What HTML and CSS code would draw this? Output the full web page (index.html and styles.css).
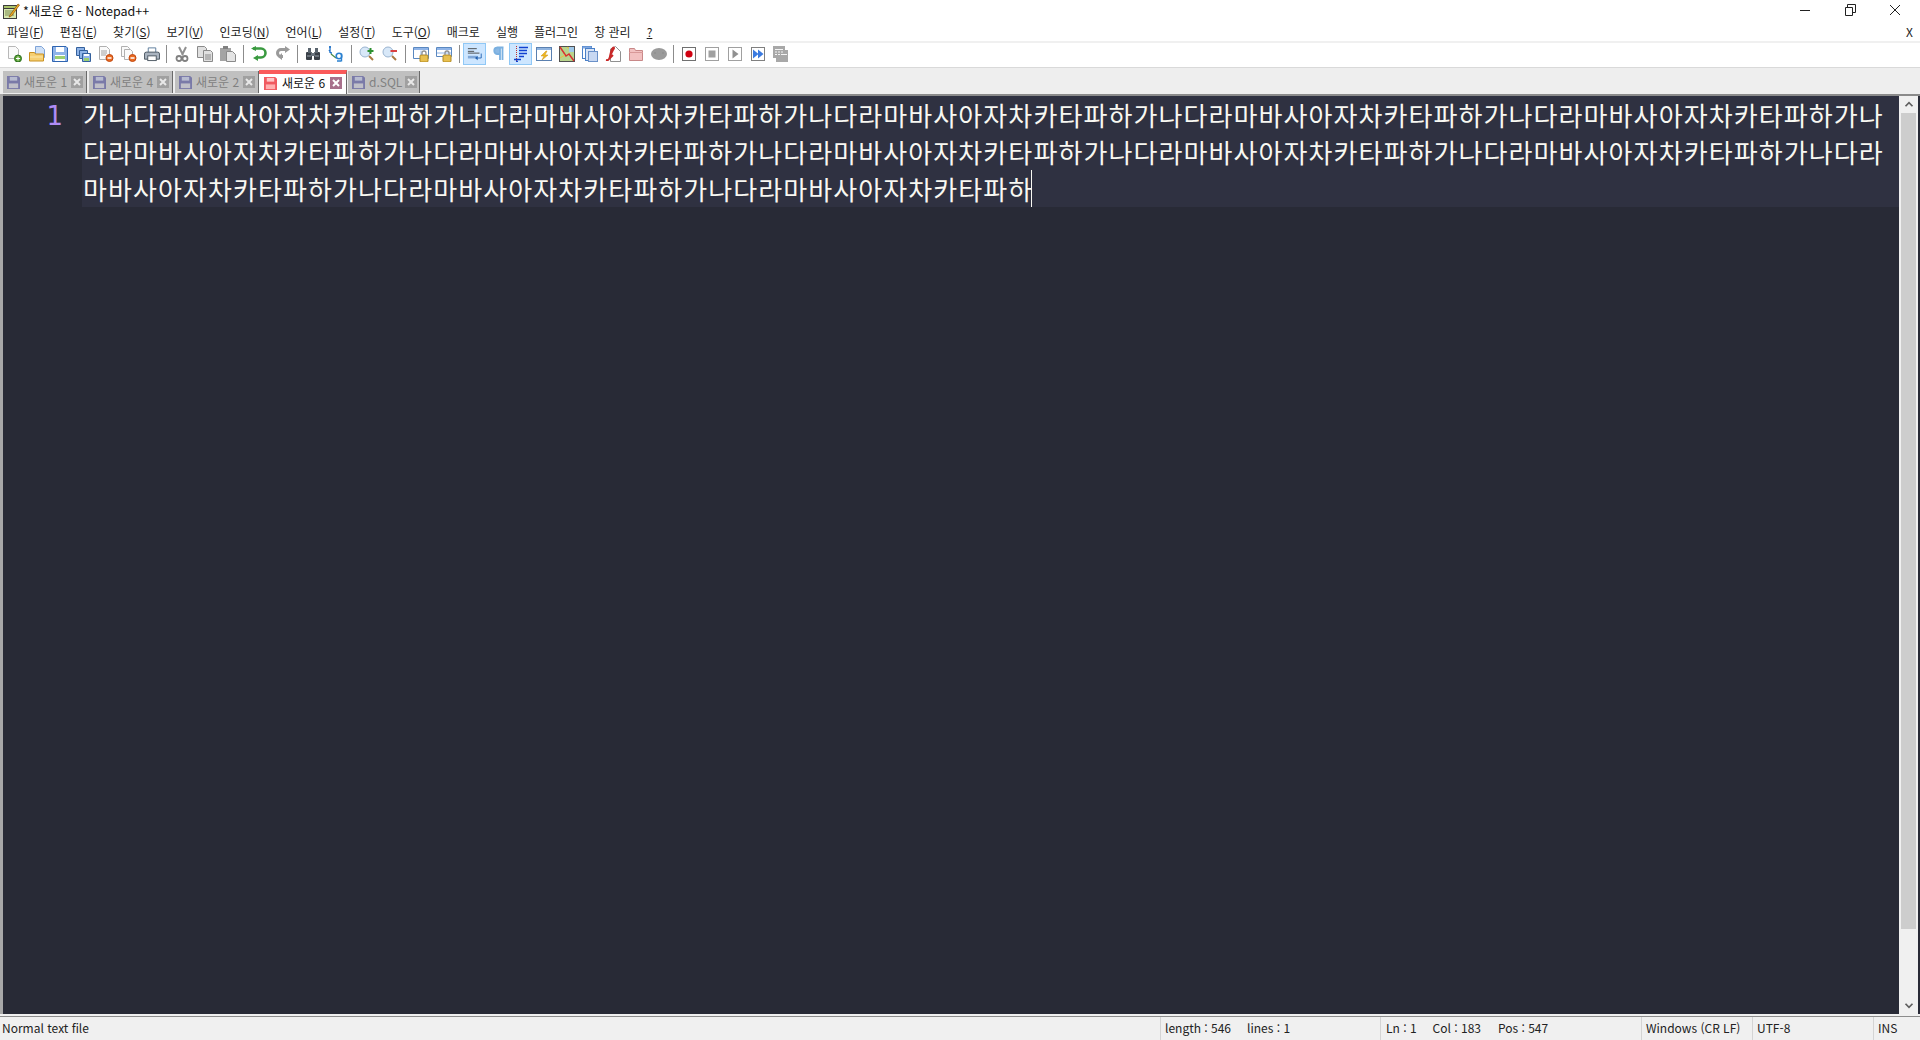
FILE: index.html
```html
<!DOCTYPE html>
<html lang="ko">
<head>
<meta charset="utf-8">
<title>*새로운 6 - Notepad++</title>
<link rel="stylesheet" href="styles.css">
</head>
<body>
<div class="app">
  <header class="titlebar">
    <svg class="app-icon" viewBox="0 0 18 18"><rect x="1.5" y="3.5" width="13" height="13" fill="#d8e8b0" stroke="#3c3c3c"/><path d="M1.5 3.5h13v3h-13z" fill="#a9c46a" stroke="#3c3c3c"/><path d="M3 9h9M3 11h8M3 13h9" stroke="#7a8a50"/><path d="M8 13l8-11 1.5 1-8 11-2.5 1z" fill="#f0b020" stroke="#8a5010" stroke-width=".7"/></svg>
    <span class="title-text">*새로운 6 - Notepad++</span>
    <div class="win-controls">
      <svg viewBox="0 0 12 12"><path d="M1 6.500h10" stroke="#222" fill="none"/></svg>
      <svg viewBox="0 0 12 12"><path d="M1.500 3.500h7v8h-7zM3.500 3.500v-3h8v8h-3" stroke="#222" fill="none"/></svg>
      <svg viewBox="0 0 12 12"><path d="M1 1l10 10M11 1L1 11" stroke="#222" fill="none"/></svg>
    </div>
  </header>

  <nav class="menubar">
    <span>파일(<u>F</u>)</span><span>편집(<u>E</u>)</span><span>찾기(<u>S</u>)</span><span>보기(<u>V</u>)</span><span>인코딩(<u>N</u>)</span><span>언어(<u>L</u>)</span><span>설정(<u>T</u>)</span><span>도구(<u>O</u>)</span><span>매크로</span><span>실행</span><span>플러그인</span><span>창 관리</span><span><u>?</u></span>
    <span class="menu-close">X</span>
  </nav>

  <div class="toolbar">
    <div class="tb"><svg viewBox="0 0 16 16"><path d="M2.500.5h7l3 3v9h-10z" fill="#fafafa" stroke="#b8b8b8"/><circle cx="12" cy="12.500" r="3.500" fill="#58a030" stroke="#2c7020"/><path d="M12 10.500v4M10 12.500h4" stroke="#fff"/></svg></div>
    <div class="tb"><svg viewBox="0 0 16 16"><path d="M6.500.5h6l3 3v8h-9z" fill="#cfe0f6" stroke="#7fa4d8"/><path d="M.5 6.500h5l1 1.500h8v7h-14z" fill="#f6cf72" stroke="#c89020"/><path d="M1 11h13" stroke="#fae6a8"/></svg></div>
    <div class="tb"><svg viewBox="0 0 16 16"><path d="M.5.5h13.500l1.500 1.500v13.500h-15z" fill="#8fb4e8" stroke="#2f64b0"/><rect x="4" y="1" width="8" height="5" fill="#fff"/><rect x="3" y="9" width="10" height="6" fill="#fff"/><rect x="3" y="10" width="10" height="3" fill="#9ccf70"/></svg></div>
    <div class="tb"><svg viewBox="0 0 16 16"><path d="M1.500 1.500h8v8h-8z" fill="#8fb4e8" stroke="#34609c"/><path d="M4.500 4.500h8v8h-8z" fill="#8fb4e8" stroke="#34609c"/><path d="M7.500 7.500h8v8h-8z" fill="#8fb4e8" stroke="#34609c"/><rect x="9" y="12" width="5" height="3" fill="#9ccf70"/><rect x="9" y="8" width="5" height="2" fill="#fff"/></svg></div>
    <div class="tb"><svg viewBox="0 0 16 16"><path d="M1.500.5h7l3 3v10h-10z" fill="#fafafa" stroke="#b0b0b0"/><path d="M3 5h6M3 7h6M3 9h5" stroke="#a0a0a0"/><circle cx="11.500" cy="12" r="3.500" fill="#ea6a20" stroke="#c04810"/><path d="M9.500 12h4" stroke="#fff" stroke-width="1.500"/></svg></div>
    <div class="tb"><svg viewBox="0 0 16 16"><path d="M.5.5h6l2 2v8h-8z" fill="#fafafa" stroke="#b0b0b0"/><path d="M3.500 3.500h6l2 2v8h-8z" fill="#fafafa" stroke="#b0b0b0"/><circle cx="11.500" cy="12" r="3.500" fill="#ea6a20" stroke="#c04810"/><path d="M9.500 12h4" stroke="#fff" stroke-width="1.500"/></svg></div>
    <div class="tb"><svg viewBox="0 0 17 16"><path d="M4.500 6V1.500h8V6" fill="#fff" stroke="#5a7a9a"/><path d="M.5 8q0-2 2-2h12q2 0 2 2v5.500h-16z" fill="#aab4c0" stroke="#4a5560"/><rect x="4" y="10" width="9" height="5" fill="#fff" stroke="#4a5560"/></svg></div>
    <div class="tb-sep"></div>
    <div class="tb"><svg viewBox="0 0 16 16"><path d="M5 1l4 8M12 1L8 9" stroke="#909090" stroke-width="2" fill="none"/><circle cx="5" cy="12.500" r="2.500" fill="none" stroke="#808080" stroke-width="1.800"/><circle cx="11" cy="12.500" r="2.500" fill="none" stroke="#808080" stroke-width="1.800"/></svg></div>
    <div class="tb"><svg viewBox="0 0 16 16"><path d="M.5.5h7l2 2v9h-9z" fill="#e0e0e0" stroke="#8a8a8a"/><path d="M6.500 4.500h7l2 2v9h-9z" fill="#e0e0e0" stroke="#8a8a8a"/><path d="M8 9h6M8 11h6M8 13h6" stroke="#888"/></svg></div>
    <div class="tb"><svg viewBox="0 0 16 16"><rect x="0" y="2" width="11" height="13" fill="#a4a4a4"/><rect x="3" y="0" width="5" height="3" fill="#808080"/><path d="M6.500 5.500h6l3 3v7h-9z" fill="#e4e4e4" stroke="#8a8a8a"/></svg></div>
    <div class="tb-sep"></div>
    <div class="tb"><svg viewBox="0 0 16 16"><path d="M2 2.500h8a3.500 3.500 0 0 1 0 9H5" fill="none" stroke="#3a9a40" stroke-width="2.600"/><path d="M0 2.500L5 0v5z M7 9v6l-5-3z" fill="#3a9a40"/></svg></div>
    <div class="tb"><svg viewBox="0 0 16 16"><path d="M14 3.500H7a3.500 3.500 0 0 0 0 7h2" fill="none" stroke="#9a9a9a" stroke-width="3"/><path d="M11 0l5 3.500-5 3.500zM8 7v7l-4-3z" fill="#9a9a9a"/></svg></div>
    <div class="tb-sep"></div>
    <div class="tb"><svg viewBox="0 0 16 16"><rect x="1" y="6" width="6" height="8" rx="1" fill="#3a4048"/><rect x="9" y="6" width="6" height="8" rx="1" fill="#3a4048"/><rect x="3" y="2" width="3" height="5" fill="#5a646e"/><rect x="10" y="2" width="3" height="5" fill="#5a646e"/><rect x="6" y="7" width="4" height="3" fill="#6a747e"/><path d="M2 10h4M10 10h4" stroke="#9aa4ae"/></svg></div>
    <div class="tb"><svg viewBox="0 0 16 16"><path d="M2 0v7M1 1h2M1 4l2 3h1" stroke="#1e70c8" fill="none" stroke-width="1.300"/><path d="M3 8l5 4" stroke="#4a8a40" stroke-width="1.300"/><circle cx="11" cy="10" r="2.800" fill="none" stroke="#2a80d0" stroke-width="1.600"/><path d="M13.500 7.500v8M9 15h4" stroke="#2a80d0" stroke-width="1.400" fill="none"/></svg></div>
    <div class="tb-sep"></div>
    <div class="tb"><svg viewBox="0 0 16 16"><circle cx="6" cy="6" r="5" fill="#d8e8f8" stroke="#9ab4d0"/><path d="M10 10l4 4" stroke="#a87840" stroke-width="2"/><path d="M11.500 2v6M8.500 5h6" stroke="#2c9030" stroke-width="2"/></svg></div>
    <div class="tb"><svg viewBox="0 0 16 16"><circle cx="6" cy="6" r="5" fill="#d8e8f8" stroke="#9ab4d0"/><path d="M10 10l4 4" stroke="#a87840" stroke-width="2"/><path d="M8.500 5h6.500" stroke="#d84040" stroke-width="2"/></svg></div>
    <div class="tb-sep"></div>
    <div class="tb"><svg viewBox="0 0 16 16"><path d="M.5 1.500h15v11h-15z" fill="#fff" stroke="#5a88c0"/><path d="M1 2h14v2H1z" fill="#8fb4e8"/><path d="M8 4.500v8" stroke="#8fb4e8"/><rect x="7" y="9" width="8" height="7" rx="1" fill="#e8c050" stroke="#b08820"/><path d="M9 9V7a2 2 0 0 1 4 0v2" fill="none" stroke="#909090" stroke-width="1.300"/></svg></div>
    <div class="tb"><svg viewBox="0 0 16 16"><path d="M.5 1.500h15v9h-15z" fill="#fff" stroke="#5a88c0"/><path d="M1 2h14v2H1z" fill="#8fb4e8"/><path d="M1 7h14" stroke="#8fb4e8"/><rect x="7" y="9" width="8" height="7" rx="1" fill="#e8c050" stroke="#b08820"/><path d="M9 9V7a2 2 0 0 1 4 0v2" fill="none" stroke="#909090" stroke-width="1.300"/></svg></div>
    <div class="tb-sep"></div>
    <div class="tb on"><svg viewBox="0 0 18 16"><path d="M1 2h10M1 5h7M1 7h13" stroke="#404040" fill="none"/><rect x="1" y="10" width="10" height="3" fill="#80a8d8"/><path d="M16 7.500v5h-5" stroke="#2060b0" fill="none"/><path d="M12 10l-3 2.500 3 2.500z" fill="#2060b0"/></svg></div>
    <div class="tb"><svg viewBox="0 0 16 16"><path d="M6.500 1.500H13.500M10 2v12M12.500 2v12M10 8H7a3.300 3.300 0 0 1 0-6.500h3" fill="#8ab8e4" stroke="#7ab0e0" stroke-width="1.800"/></svg></div>
    <div class="tb on"><svg viewBox="0 0 16 16"><path d="M3.500 0v16" stroke="#c03030" stroke-dasharray="1 1"/><path d="M6 1.500h9M6 4.500h8M6 7.500h8M6 10.500h5M1 13.500h7M3 15.500h2" stroke="#1040d0" stroke-width="1.500"/></svg></div>
    <div class="tb"><svg viewBox="0 0 16 16"><rect x=".5" y="1.500" width="15" height="13" fill="#fff" stroke="#5a80b0"/><rect x="1" y="2" width="14" height="2" fill="#90b4e0"/><path d="M10 5L5 10h3l-2 4 6-5H9l2-4z" fill="#f0b820" stroke="#c89018" stroke-width=".5"/></svg></div>
    <div class="tb"><svg viewBox="0 0 16 16"><rect x=".5" y=".5" width="15" height="15" fill="#b8d48c" stroke="#505050"/><path d="M1 1l6 9 3-2 5 7" stroke="#d83030" fill="none" stroke-width="1.500"/><path d="M8 1l6 4M1 12l5-3" stroke="#e8c040"/><path d="M10 1h5v5h-5z" fill="#a0c8e8"/></svg></div>
    <div class="tb"><svg viewBox="0 0 16 16"><rect x=".5" y=".5" width="9" height="12" fill="#fff" stroke="#4a80c8"/><rect x=".5" y=".5" width="9" height="2" fill="#80a8e0"/><rect x="3.500" y="2.500" width="9" height="12" fill="#d8e4f6" stroke="#4a80c8"/><rect x="6.500" y="5.500" width="9" height="10" fill="#c8d8f2" stroke="#6a90c8"/></svg></div>
    <div class="tb"><svg viewBox="0 0 16 16"><path d="M5.500 3l5-2.500 5 5v10h-10z" fill="#fff" stroke="#909090"/><path d="M1 14c5 1 3-5 6-11 2-3 3-1 1 1L6 8l-1 4 3-3" fill="none" stroke="#c82828" stroke-width="1.800"/></svg></div>
    <div class="tb"><svg viewBox="0 0 16 16"><path d="M1.500 2.500h5l1 2h7v10h-13z" fill="#f2c0c0" stroke="#c88888"/><path d="M1 6.500h14" stroke="#d89898"/></svg></div>
    <div class="tb"><svg viewBox="0 0 16 16"><ellipse cx="8" cy="8" rx="8" ry="6" fill="#9a9a9a"/><circle cx="4" cy="7" r=".8" fill="#888"/><circle cx="12" cy="7" r=".8" fill="#888"/></svg></div>
    <div class="tb-sep"></div>
    <div class="tb"><svg viewBox="0 0 16 16"><rect x="1.500" y="1.500" width="13" height="13" fill="#fff" stroke="#707070"/><circle cx="8" cy="8" r="3.600" fill="#d00010"/></svg></div>
    <div class="tb"><svg viewBox="0 0 16 16"><rect x="1.500" y="1.500" width="13" height="13" fill="#fff" stroke="#a0a0a0"/><rect x="4.500" y="4.500" width="7" height="7" fill="#a0a0a0"/></svg></div>
    <div class="tb"><svg viewBox="0 0 16 16"><rect x="1.500" y="1.500" width="13" height="13" fill="#fff" stroke="#a0a0a0"/><path d="M5.500 3.500l6 4.500-6 4.500z" fill="#909090"/></svg></div>
    <div class="tb"><svg viewBox="0 0 16 16"><rect x="1.500" y="1.500" width="13" height="13" fill="#fff" stroke="#808080"/><path d="M3 3.500l5.500 4.500-5.500 4.500zM8 3.500l5.500 4.500-5.500 4.500z" fill="#3a7ae0"/></svg></div>
    <div class="tb"><svg viewBox="0 0 16 16"><path d="M0 0h12v4h3v12H3v-4H0z" fill="#a8a8a8"/><path d="M2 3h8v1H2zM2 5.500h2v1H2zM5 5.500h2v1H5zM8 5.500h2v1H8zM2 8h2v1H2zM5 8h2v1H5z" fill="#f4f4f4"/><rect x="8" y="8" width="6" height="1" fill="#f4f4f4"/></svg></div>
  </div>

  <div class="tabbar">
    <div class="tab"><svg class="tab-save" viewBox="0 0 14 14"><path d="M0 0h12l2 2v12H0z" fill="#7a7aa8"/><rect x="3" y="1" width="8" height="4" fill="#b8bcd0"/><rect x="2" y="8" width="10" height="5" fill="#c0c0c8"/></svg><span class="tab-label">새로운 1</span><svg class="tab-close" viewBox="0 0 12 12"><rect width="12" height="12" fill="#a0a0a0"/><path d="M3 3l6 6M9 3l-6 6" stroke="#e8e8e8" stroke-width="2"/></svg></div>
    <div class="tab"><svg class="tab-save" viewBox="0 0 14 14"><path d="M0 0h12l2 2v12H0z" fill="#7a7aa8"/><rect x="3" y="1" width="8" height="4" fill="#b8bcd0"/><rect x="2" y="8" width="10" height="5" fill="#c0c0c8"/></svg><span class="tab-label">새로운 4</span><svg class="tab-close" viewBox="0 0 12 12"><rect width="12" height="12" fill="#a0a0a0"/><path d="M3 3l6 6M9 3l-6 6" stroke="#e8e8e8" stroke-width="2"/></svg></div>
    <div class="tab"><svg class="tab-save" viewBox="0 0 14 14"><path d="M0 0h12l2 2v12H0z" fill="#7a7aa8"/><rect x="3" y="1" width="8" height="4" fill="#b8bcd0"/><rect x="2" y="8" width="10" height="5" fill="#c0c0c8"/></svg><span class="tab-label">새로운 2</span><svg class="tab-close" viewBox="0 0 12 12"><rect width="12" height="12" fill="#a0a0a0"/><path d="M3 3l6 6M9 3l-6 6" stroke="#e8e8e8" stroke-width="2"/></svg></div>
    <div class="tab active"><svg class="tab-save" viewBox="0 0 14 14"><path d="M0 0h12l2 2v12H0z" fill="#f05a60"/><rect x="3" y="1" width="8" height="4" fill="#ffc8c8"/><rect x="2" y="8" width="10" height="5" fill="#ffb0b0"/></svg><span class="tab-label">새로운 6</span><svg class="tab-close" viewBox="0 0 12 12"><rect width="12" height="12" fill="#a8708c"/><path d="M3 3l6 6M9 3l-6 6" stroke="#fff" stroke-width="2"/></svg></div>
    <div class="tab tab-short"><svg class="tab-save" viewBox="0 0 14 14"><path d="M0 0h12l2 2v12H0z" fill="#7a7aa8"/><rect x="3" y="1" width="8" height="4" fill="#b8bcd0"/><rect x="2" y="8" width="10" height="5" fill="#c0c0c8"/></svg><span class="tab-label">d.SQL</span><svg class="tab-close" viewBox="0 0 12 12"><rect width="12" height="12" fill="#a0a0a0"/><path d="M3 3l6 6M9 3l-6 6" stroke="#e8e8e8" stroke-width="2"/></svg></div>
  </div>

  <main class="editor">
    <div class="gutter">1</div>
    <div class="doc">
      <div class="current-line"><span class="code">가나다라마바사아자차카타파하가나다라마바사아자차카타파하가나다라마바사아자차카타파하가나다라마바사아자차카타파하가나다라마바사아자차카타파하가나다라마바사아자차카타파하가나다라마바사아자차카타파하가나다라마바사아자차카타파하가나다라마바사아자차카타파하가나다라마바사아자차카타파하가나다라마바사아자차카타파하가나다라마바사아자차카타파하가나다라마바사아자차카타파하</span><span class="caret"></span></div>
    </div>
    <div class="scrollbar">
      <svg class="sb-arrow" viewBox="0 0 12 8"><path d="M2 6l4-4 4 4" fill="none" stroke="#606060" stroke-width="2"/></svg>
      <div class="sb-thumb"></div>
      <div class="sb-space"></div>
      <svg class="sb-arrow" viewBox="0 0 12 8"><path d="M2 2l4 4 4-4" fill="none" stroke="#606060" stroke-width="2"/></svg>
    </div>
  </main>

  <footer class="statusbar">
    <div class="st st-type">Normal text file</div>
    <div class="st st-len"><span class="st-a">length : 546</span><span>lines : 1</span></div>
    <div class="st st-pos"><span class="st-b">Ln : 1</span><span class="st-c">Col : 183</span><span>Pos : 547</span></div>
    <div class="st st-eol">Windows (CR LF)</div>
    <div class="st st-enc">UTF-8</div>
    <div class="st st-ins">INS</div>
  </footer>
</div>
</body>
</html>
```
FILE: styles.css
```css
* { box-sizing: border-box; }
html, body { margin: 0; height: 100%; overflow: hidden; }
body { background: #fff; color: #111; font: 12px/1 "Noto Sans CJK KR", "Noto Sans", sans-serif; }
svg { display: block; }
.app { display: flex; flex-direction: column; height: 1040px; }

.titlebar { height: 22px; display: flex; align-items: center; padding-left: 2px; background: #fff; }
.app-icon { width: 18px; height: 18px; }
.title-text { margin-left: 3px; font-size: 12.500px; }
.win-controls { margin-left: auto; align-self: flex-start; margin-top: 4px; display: flex; gap: 33px; padding-right: 19px; }
.win-controls svg { width: 12px; height: 12px; }

.menubar { height: 19px; display: flex; align-items: center; gap: 16px; padding-left: 7px; background: #fff; font-size: 12px; color: #222; }
.menu-close { margin-left: auto; padding-right: 7px; font-size: 12px; color: #222; }

.toolbar { height: 27px; display: flex; align-items: flex-start; padding: 0 0 0 2px; background: #fff; border-top: 2px solid #f0f0f0; border-bottom: 1px solid #d9d9d9; }
.tb { width: 23px; height: 22px; flex: none; display: flex; align-items: center; justify-content: center; }
.tb svg { width: 16px; height: 16px; }
.tb.on { background: #cde6ff; border: 1px solid #90c8f6; }
.tb-sep { width: 7.850px; height: 18px; margin-top: 2px; flex: none; display: flex; justify-content: center; }
.tb-sep::before { content: ""; width: 1px; height: 100%; background: #8c8c8c; }

.tabbar { height: 26px; display: flex; align-items: flex-start; padding: 2px 0 0 3px; background: #eeeeee; }
.tab { width: 84px; height: 22px; margin-top: 1px; margin-right: 2px; display: flex; align-items: center; padding: 0 3px 0 4px; background: #c0c0c0; border-right: 1px solid #6a6a6a; color: #808080; font-size: 12px; }
.tab.active { width: 88px; height: 24px; margin: 0 1px 0 -2px; padding: 0 4px 2px 5px; background: #fff; border-top: 4px solid #fa5a5a; color: #111; }
.tab-short { width: 72px; padding-right: 2px; }
.tab-save { width: 13px; height: 13px; flex: none; }
.tab-label { margin-left: 4px; flex: 1; white-space: nowrap; }
.tab.active .tab-label { margin-left: 5px; }
.tab-close { width: 12px; height: 12px; flex: none; }

.editor { flex: 1; min-height: 0; display: flex; background: #282a36; border: solid #f0f0f0; border-width: 0 0 2px 0; box-shadow: inset 3px 0 0 #a8a8a8, inset 0 2px 0 #8a8a8a; padding: 2px 0 0 3px; }
.gutter { width: 79px; padding: 4px 19px 0 0; text-align: right; color: #b08cf5; font: 26px/33px "DejaVu Sans", sans-serif; }
.doc { flex: 1; min-width: 0; }
.current-line { background: #2f3141; height: 111px; color: #f8f8f2; font: 26px/37px "Noto Sans CJK KR", sans-serif; letter-spacing: 1.090px; word-break: break-all; padding-right: 12px; padding-left: 1px; }
.caret { display: inline-block; width: 1px; height: 37px; background: #f8f8f2; vertical-align: top; margin-left: -2px; }
.scrollbar { width: 19px; margin-right: 2px; background: #f0f0f0; display: flex; flex-direction: column; align-items: center; }
.sb-arrow { width: 12px; height: 17px; flex: none; padding: 5px 0; }
.sb-thumb { width: 15px; height: 816px; background: #cdcdcd; flex: none; }
.sb-space { flex: 1; }

.statusbar { height: 24px; display: flex; align-items: center; background: #f0f0f0; border-top: 1px solid #8c8c8c; color: #222; font-size: 12px; }
.st { height: 100%; display: flex; align-items: center; padding: 0 0 2px 4px; border-left: 1px solid #d4d4d4; white-space: nowrap; flex: none; }
.st-type { width: 1160px; border-left: 0; padding-left: 2px; }
.st-len { width: 220px; }
.st-pos { width: 261px; padding-left: 5px; }
.st-eol { width: 111px; }
.st-enc { width: 121px; }
.st-ins { flex: 1; }
.st-a { margin-right: 16px; }
.st-b { margin-right: 16px; }
.st-c { margin-right: 17px; }
```
